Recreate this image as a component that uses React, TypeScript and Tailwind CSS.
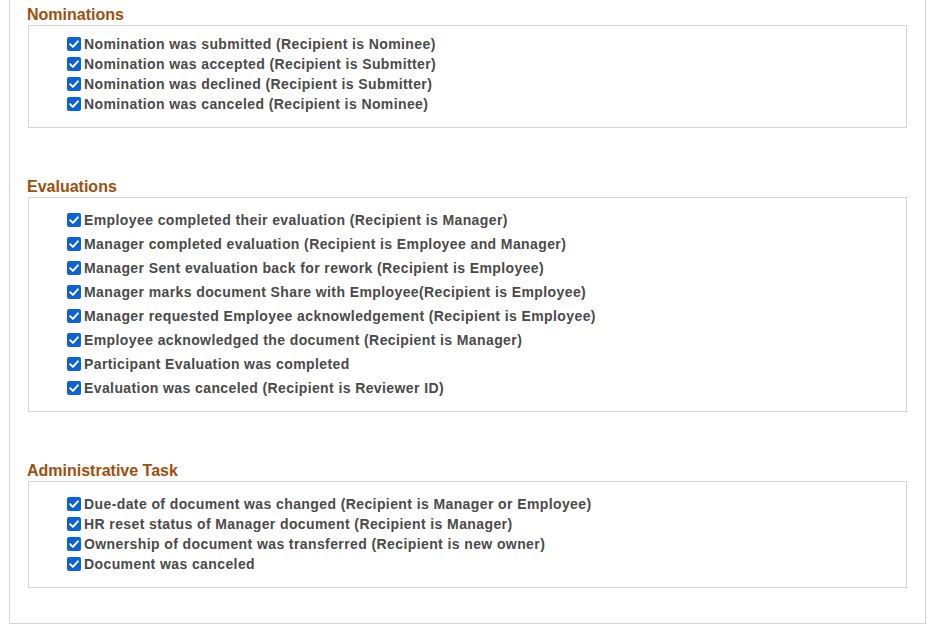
import React from "react";

// --- checkbox glyph (checked state only, as in the screenshot) ---
const Check = () => (
  <span className="flex h-[14px] w-[14px] shrink-0 items-center justify-center rounded-[2px] bg-[#0b62d6]">
    <svg viewBox="0 0 14 14" className="h-[14px] w-[14px]" fill="none">
      <path d="M3.2 7.2 L5.9 9.9 L10.9 4.3" stroke="#fff" strokeWidth="2" strokeLinecap="round" strokeLinejoin="round" />
    </svg>
  </span>
);

const Item = ({ label, tall }: { label: string; tall?: boolean }) => (
  <div className={`flex items-center gap-[3px] ${tall ? "h-[24px]" : "h-[20px]"}`}>
    <Check />
    <span className="text-[14px] leading-[16px] font-bold tracking-[0.4px] text-[#4a4a4a] whitespace-nowrap">{label}</span>
  </div>
);

const Heading = ({ children }: { children: React.ReactNode }) => (
  <h2 className="h-[18px] text-[16px] leading-[20px] font-bold text-[#9f4f0c] -ml-px">{children}</h2>
);

const nominations = [
  "Nomination was submitted (Recipient is Nominee)",
  "Nomination was accepted (Recipient is Submitter)",
  "Nomination was declined (Recipient is Submitter)",
  "Nomination was canceled (Recipient is Nominee)",
];

const evaluations = [
  "Employee completed their evaluation (Recipient is Manager)",
  "Manager completed evaluation (Recipient is Employee and Manager)",
  "Manager Sent evaluation back for rework (Recipient is Employee)",
  "Manager marks document Share with Employee(Recipient is Employee)",
  "Manager requested Employee acknowledgement (Recipient is Employee)",
  "Employee acknowledged the document (Recipient is Manager)",
  "Participant Evaluation was completed",
  "Evaluation was canceled (Recipient is Reviewer ID)",
];

const adminTasks = [
  "Due-date of document was changed (Recipient is Manager or Employee)",
  "HR reset status of Manager document (Recipient is Manager)",
  "Ownership of document was transferred (Recipient is new owner)",
  "Document was canceled",
];

export default function App() {
  return (
    <div className="w-[934px] h-[632px] bg-white overflow-hidden font-['Liberation_Sans',Arial,sans-serif]">
      <div className="ml-[9px] w-[917px] h-[624px] border-x border-b border-[#d4d5d8] pl-[18px] pt-[5px]">

        {/* Nominations */}
        <Heading>Nominations</Heading>
        <div className="mt-[2px] w-[879px] border border-[#d4d5d8] pl-[38px] pt-[8px] pb-[13px]">
          {nominations.map((n) => (
            <Item key={n} label={n} />
          ))}
        </div>

        {/* Evaluations */}
        <div className="mt-[49px]">
          <Heading>Evaluations</Heading>
        </div>
        <div className="mt-[2px] w-[879px] border border-[#d4d5d8] pl-[38px] pt-[10px] pb-[11px]">
          {evaluations.map((e) => (
            <Item key={e} label={e} tall />
          ))}
        </div>

        {/* Administrative Task */}
        <div className="mt-[49px]">
          <Heading>Administrative Task</Heading>
        </div>
        <div className="mt-[2px] w-[879px] border border-[#d4d5d8] pl-[38px] pt-[12px] pb-[13px]">
          {adminTasks.map((a) => (
            <Item key={a} label={a} />
          ))}
        </div>
      </div>
    </div>
  );
}
